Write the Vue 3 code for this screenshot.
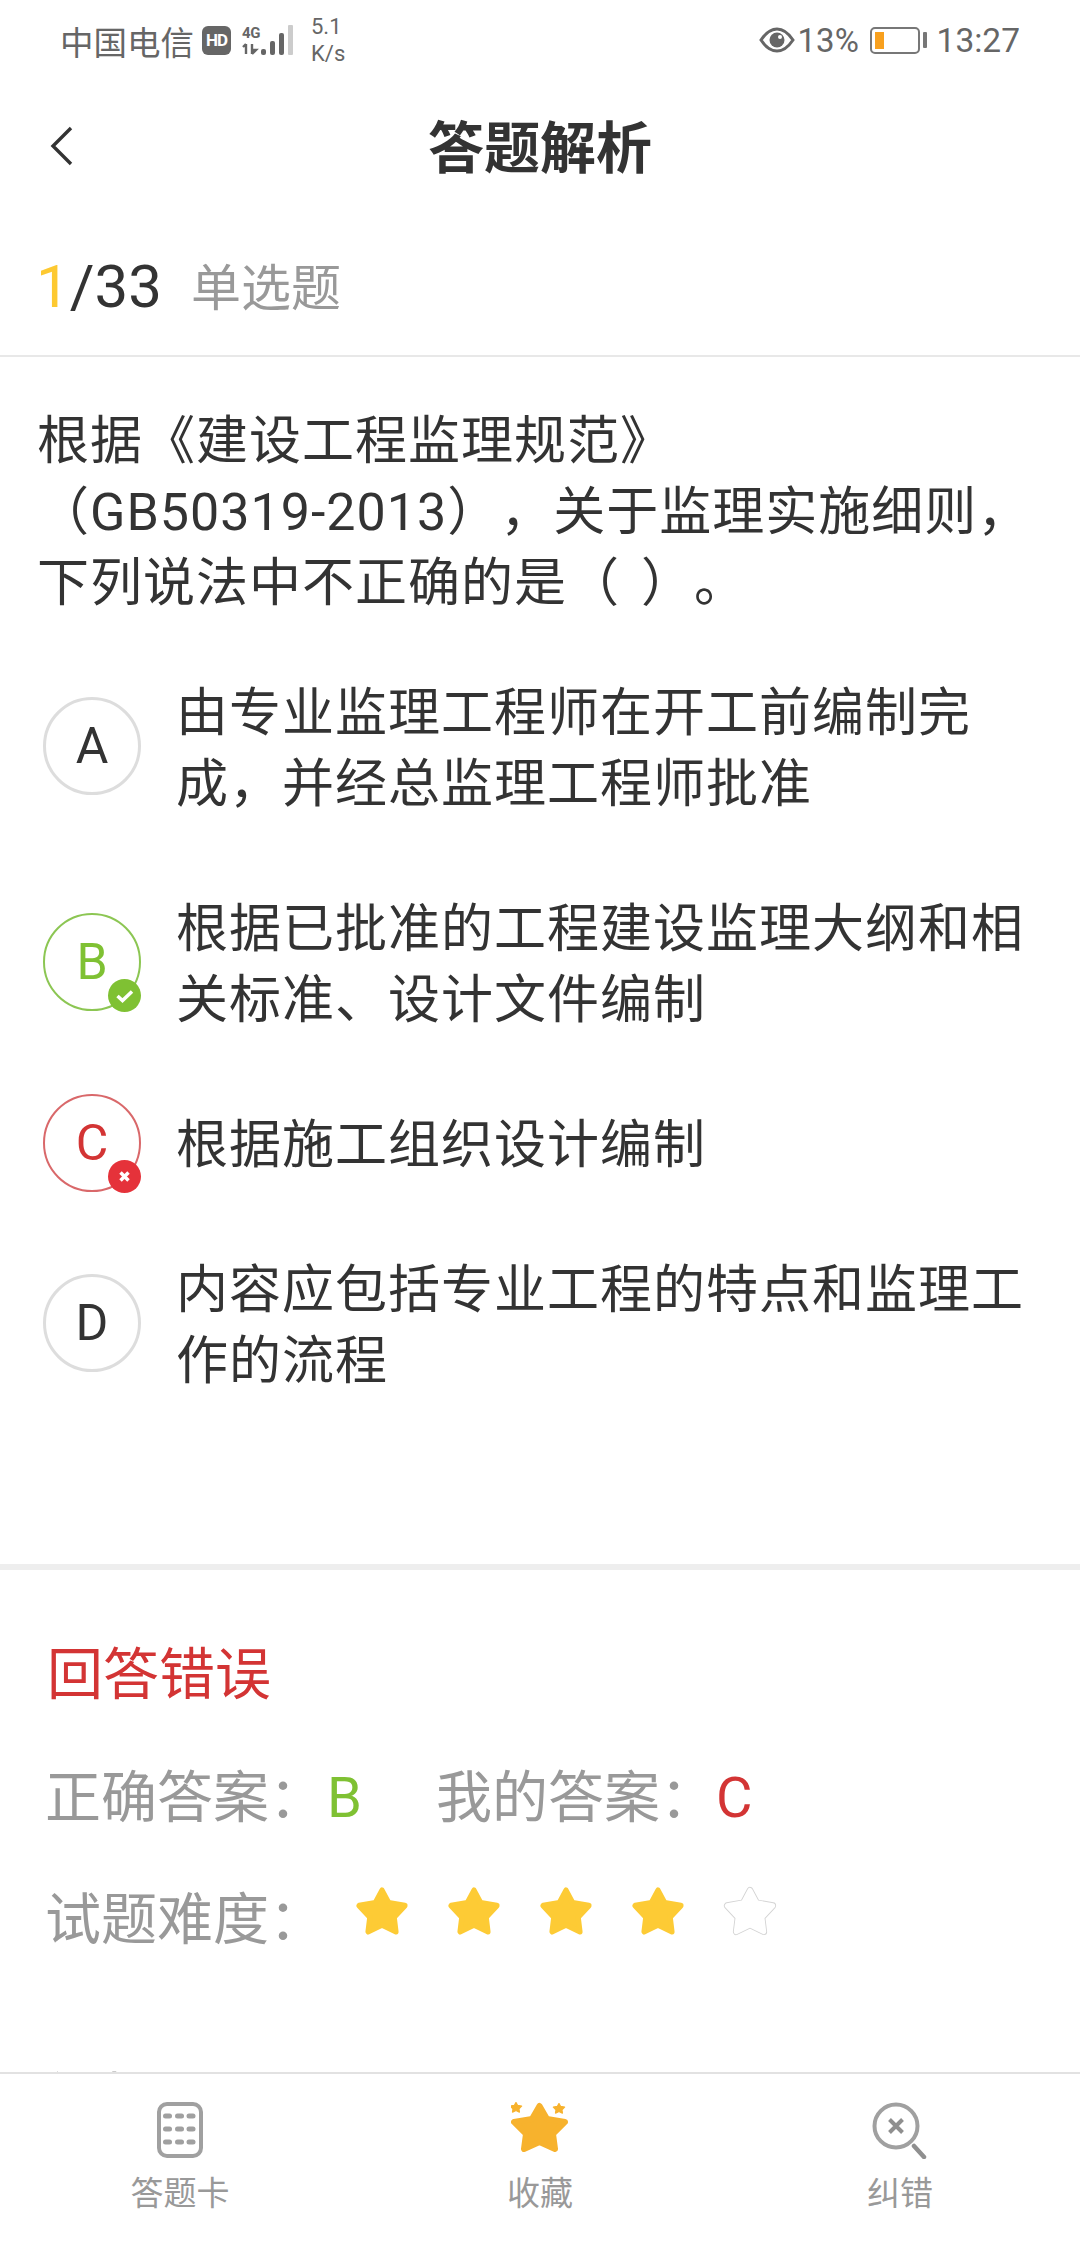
<script setup>
const options = [
  { key: 'A', text: '由专业监理工程师在开工前编制完成，并经总监理工程师批准', state: '' },
  { key: 'B', text: '根据已批准的工程建设监理大纲和相关标准、设计文件编制', state: 'right' },
  { key: 'C', text: '根据施工组织设计编制', state: 'wrong' },
  { key: 'D', text: '内容应包括专业工程的特点和监理工作的流程', state: '' },
]
const stars = [true, true, true, true, false]
const starPath = 'M28.500 5L36 18l18 3-12 12 2 15-15.500-7L13 48l2-15L3 21l18-3z'
const dots = [15, 28, 41].flatMap(y => [11.5, 23.5, 35].map(x => ({ x, y })))
</script>

<template>
  <div class="page">
    <div class="status">
      <div class="status-left">
        <span class="carrier">中国电信</span>
        <span class="hd">HD</span>
        <span class="net">
          <span class="fourg">4G</span>
          <svg class="arrows" width="18" height="12" viewBox="0 0 18 12"><path d="M4 1v10M1 4l3-3M10 1v10M10 11l4-4-4 0" fill="none" stroke="#666" stroke-width="2.400"/></svg>
        </span>
        <svg class="signal" width="32" height="32" viewBox="0 0 32 32">
          <rect x="0" y="25" width="5" height="6" rx="2" fill="#666"/>
          <rect x="9" y="17" width="5" height="14" rx="2" fill="#666"/>
          <rect x="18" y="9" width="5" height="22" rx="2" fill="#666"/>
          <rect x="27" y="1" width="5" height="30" rx="1" fill="#ccc"/>
        </svg>
        <span class="speed">5.1<br />K/s</span>
      </div>
      <div class="status-right">
        <svg width="36" height="26" viewBox="0 0 36 26">
          <path d="M2 13C8 4 13 2 18 2s10 2 16 11c-6 9-11 11-16 11S8 22 2 13z" fill="none" stroke="#666" stroke-width="3"/>
          <circle cx="18" cy="13" r="7.500" fill="#666"/>
          <circle cx="21" cy="10" r="2" fill="#fff"/>
        </svg>
        <span class="pct">13%</span>
        <span class="battery"><i></i></span>
        <span class="tip"></span>
        <span class="time">13:27</span>
      </div>
    </div>

    <header class="nav">
      <svg class="back" width="24" height="40" viewBox="0 0 24 40"><path d="M21 2L3 20l18 18" fill="none" stroke="#333" stroke-width="3.400"/></svg>
      <h1>答题解析</h1>
    </header>

    <div class="counter">
      <span class="num"><b>1</b>/33</span>
      <span class="type">单选题</span>
    </div>

    <main class="content">
      <section class="question">
        <p class="stem">根据《建设工程监理规范》<br />（GB50319-2013），关于监理实施细则，<br />下列说法中不正确的是（ ）。</p>
        <div class="options">
          <div v-for="o in options" :key="o.key" class="option">
            <div class="circle" :class="o.state">
              {{ o.key }}
              <svg v-if="o.state === 'right'" class="badge" viewBox="0 0 33 33">
                <circle cx="16.500" cy="16.500" r="16.500" fill="#7fc133"/>
                <path d="M9.500 17l5 4.500L24 12.500" fill="none" stroke="#fff" stroke-width="3.500"/>
              </svg>
              <svg v-if="o.state === 'wrong'" class="badge" viewBox="0 0 33 33">
                <circle cx="16.500" cy="16.500" r="16.500" fill="#e5323a"/>
                <path d="M12.500 12.500l8 8M20.500 12.500l-8 8" fill="none" stroke="#fff" stroke-width="3.500"/>
              </svg>
            </div>
            <div class="text">{{ o.text }}</div>
          </div>
        </div>
      </section>

      <section class="result">
        <div class="verdict">回答错误</div>
        <div class="answers">
          <span class="label">正确答案：</span><span class="letter green">B</span>
          <span class="label">我的答案：</span><span class="letter red">C</span>
        </div>
        <div class="difficulty">
          <span class="label">试题难度：</span>
          <div class="stars">
            <svg v-for="(s, i) in stars" :key="i" width="60" height="56" viewBox="-5 -2.650 67 58.300" preserveAspectRatio="none">
              <path v-if="s" :d="starPath" fill="#fdcb35" stroke="#fdcb35" stroke-width="6" stroke-linejoin="round"/>
              <template v-else>
                <path :d="starPath" fill="#d4d4d4" stroke="#d4d4d4" stroke-width="7.200" stroke-linejoin="round"/>
                <path :d="starPath" fill="#fff" stroke="#fff" stroke-width="5.200" stroke-linejoin="round"/>
              </template>
            </svg>
          </div>
        </div>
        <div class="more">解析</div>
      </section>
    </main>

    <nav class="tabs">
      <div class="tab">
        <svg width="48" height="58" viewBox="0 0 48 58">
          <rect x="3" y="3" width="42" height="52" rx="8" fill="none" stroke="#a0a0a0" stroke-width="4"/>
          <rect v-for="(d, i) in dots" :key="i" :x="d.x - 4.500" :y="d.y - 2.500" width="9" height="5" rx="2.500" fill="#a0a0a0"/>
        </svg>
        <span>答题卡</span>
      </div>
      <div class="tab">
        <svg width="58" height="58" viewBox="0 0 58 58">
          <path :d="starPath" fill="#f7b22d" stroke="#f7b22d" stroke-width="6" stroke-linejoin="round"/>
          <path :d="starPath" transform="translate(-1.300 0.500) scale(0.220)" fill="#f7b22d" stroke="#f7b22d" stroke-width="6" stroke-linejoin="round"/>
          <path :d="starPath" transform="translate(41.700 1.500) scale(0.220)" fill="#f7b22d" stroke="#f7b22d" stroke-width="6" stroke-linejoin="round"/>
        </svg>
        <span>收藏</span>
      </div>
      <div class="tab">
        <svg width="56" height="58" viewBox="0 0 56 58">
          <circle cx="24" cy="25" r="21.500" fill="none" stroke="#a0a0a0" stroke-width="4"/>
          <path d="M17.500 18.500l13 13M30.500 18.500l-13 13" fill="none" stroke="#8f8f8f" stroke-width="4"/>
          <path d="M42 45l10 11" fill="none" stroke="#8f8f8f" stroke-width="4.500" stroke-linecap="round"/>
        </svg>
        <span>纠错</span>
      </div>
    </nav>
  </div>
</template>

<style scoped>
.page {
  width: 1080px;
  height: 2244px;
  display: flex;
  flex-direction: column;
  background: #fff;
  color: #333;
  font-family: Roboto, "Noto Sans CJK SC", sans-serif;
  text-spacing-trim: space-all;
  overflow: hidden;
}
.status {
  height: 76px;
  flex: none;
  display: flex;
  justify-content: space-between;
  align-items: center;
  padding: 4px 60px 0 60px;
  box-sizing: border-box;
  color: #666;
}
.status-left, .status-right { display: flex; align-items: center; }
.carrier { font-size: 33.500px; width: 136px; white-space: nowrap; }
.hd {
  margin-left: 6px;
  width: 29px;
  height: 29px;
  border-radius: 6px;
  background: #666;
  color: #fff;
  font-size: 17px;
  font-weight: 700;
  line-height: 29px;
  text-align: center;
  letter-spacing: -1px;
}
.net { margin-left: 11px; width: 18px; display: flex; flex-direction: column; align-items: center; }
.fourg { font-size: 15px; font-weight: 700; line-height: 17px; letter-spacing: -0.5px; }
.arrows { display: block; margin-top: 1px; }
.signal { margin-left: 1px; }
.speed { margin-left: 18px; font-size: 22px; line-height: 27px; white-space: nowrap; }
.pct { margin-left: 3px; font-size: 33px; width: 67px; }
.battery {
  margin-left: 5px;
  width: 50px;
  height: 27px;
  box-sizing: border-box;
  border: 2px solid #777;
  border-radius: 5px;
  padding: 3px;
  display: flex;
}
.battery i { width: 9px; background: #f8a01e; display: block; }
.tip { margin-left: 3px; width: 4px; height: 16px; background: #777; border-radius: 1px; }
.time { margin-left: 10px; font-size: 33.500px; }

.nav {
  height: 142px;
  flex: none;
  position: relative;
  display: flex;
  align-items: center;
  justify-content: center;
  box-sizing: border-box;
  padding-top: 3px;
}
.back { position: absolute; left: 50px; top: 50px; }
.nav h1 { margin: 0; font-size: 56px; font-weight: 700; color: #333; line-height: 1; }

.counter {
  height: 139px;
  flex: none;
  display: flex;
  align-items: center;
  padding-left: 36px;
  box-sizing: border-box;
  border-bottom: 2px solid #e8e8e8;
}
.num { font-size: 60px; }
.num b { font-weight: 400; color: #fdc931; }
.type { margin-left: 29px; margin-bottom: 6px; font-size: 50px; color: #999; }

.content { flex: 1; min-height: 0; overflow: hidden; }
.question { height: 1213px; box-sizing: border-box; padding: 49px 0 0 37px; border-bottom: 6px solid #eee; }
.stem { margin: 0; font-size: 52px; line-height: 71px; letter-spacing: 1px; word-spacing: 7px; white-space: nowrap; color: #333; }
.options { margin-top: 53px; display: flex; flex-direction: column; gap: 68px; }
.option { display: flex; align-items: center; padding-left: 6px; }
.circle {
  flex: none;
  position: relative;
  width: 98px;
  height: 98px;
  margin: -11px 0;
  box-sizing: border-box;
  border: 3px solid #ddd;
  border-radius: 50%;
  display: flex;
  align-items: center;
  justify-content: center;
  font-size: 50px;
  color: #333;
}
.circle.right { border: 2px solid #8cc653; color: #7fc133; }
.circle.wrong { border: 2px solid #d9686a; color: #d33434; }
.badge { position: absolute; right: -2px; bottom: -3px; width: 33px; height: 33px; }
.text {
  margin-left: 35px;
  width: 860px;
  padding-top: 6px;
  font-size: 52px;
  line-height: 71px;
  letter-spacing: 1px;
  color: #333;
}

.result { padding: 70px 0 0 47px; }
.verdict { font-size: 56px; line-height: 70px; color: #d33434; }
.answers { margin-top: 53px; height: 70px; display: flex; align-items: center; }
.label { margin-left: -2px; font-size: 56px; color: #999; white-space: nowrap; width: 272px; }
.answers .label { width: 282px; margin-bottom: 11px; }
.answers .letter + .label { margin-left: 0; width: 280px; }
.letter { font-size: 56px; width: 109px; }
.green { color: #7fc133; }
.red { color: #d33434; }
.difficulty { margin-top: 49px; height: 70px; display: flex; align-items: center; }
.difficulty .label { margin-bottom: 6px; }
.stars { margin-left: 35px; margin-top: -12px; display: flex; gap: 32px; }
.stars svg { display: block; }
.more { margin-top: 113px; font-size: 54px; line-height: 70px; color: #333; }

.tabs {
  height: 172px;
  flex: none;
  box-sizing: border-box;
  border-top: 2px solid #e2e2e2;
  display: grid;
  grid-template-columns: repeat(3, 1fr);
  background: #fff;
}
.tab { display: flex; flex-direction: column; align-items: center; padding-top: 27px; color: #999; font-size: 33px; }
.tab svg { display: block; }
.tab span { margin-top: 12px; line-height: 46px; }
</style>
